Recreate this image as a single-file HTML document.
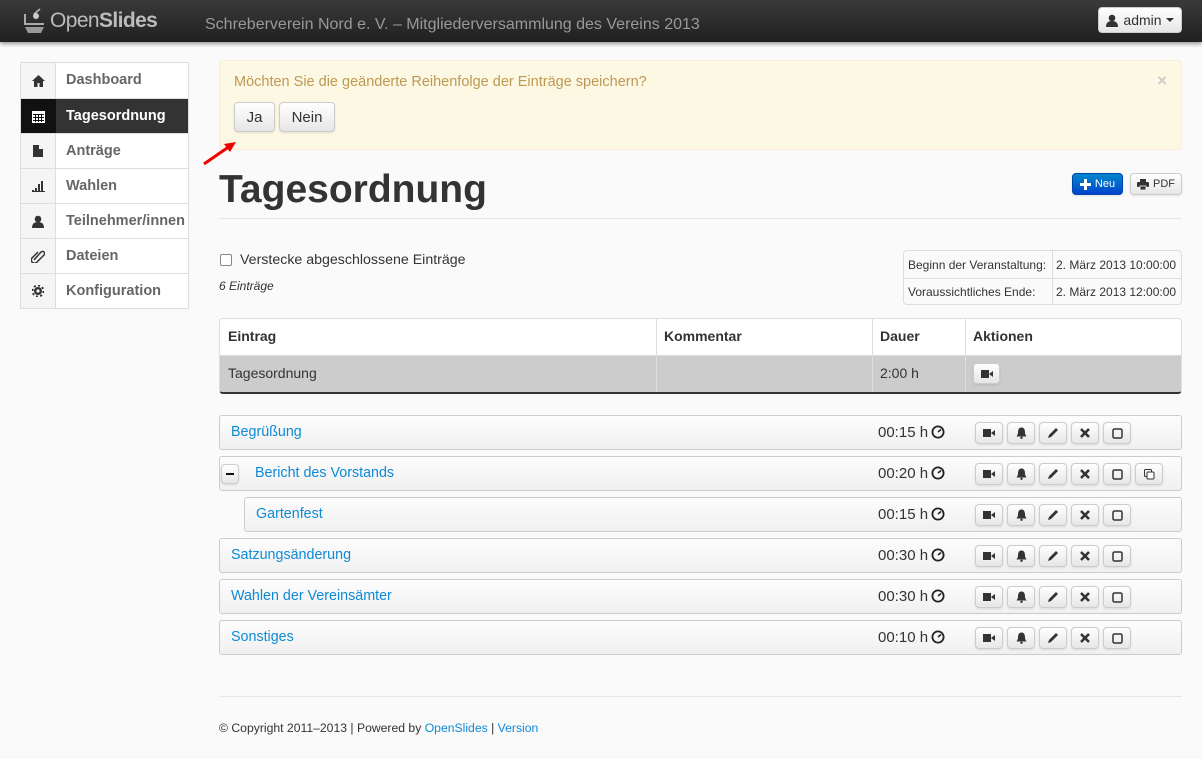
<!DOCTYPE html>
<html><head><meta charset="utf-8"><style>
*{box-sizing:border-box;margin:0;padding:0}
body{width:1202px;height:759px;background:#fafafa;font-family:"Liberation Sans",sans-serif;color:#333;position:relative;overflow:hidden;font-size:14px}
.a{position:absolute}
.nav{left:0;top:0;width:1202px;height:42px;background:linear-gradient(#3a3a3a,#202020);box-shadow:0 2px 4px rgba(0,0,0,.4)}
.side{left:20px;top:62px;width:169px;border:1px solid #ddd;background:#fff}
.side div{height:35px;border-top:1px solid #ddd;position:relative;font-weight:bold;font-size:14.5px;color:#666;line-height:35px;padding-left:45px;white-space:nowrap}
.side div:first-child{border-top:none}
.side div .ic{position:absolute;left:0;top:0;width:35px;height:100%;background:#f5f5f5;border-right:1px solid #ddd;display:flex;align-items:center;justify-content:center}
.side div.act{background:#333;color:#fff}
.side div.act .ic{background:#111;border-color:#111}
.btn{position:absolute;border:1px solid #ccc;border-radius:4px;background:linear-gradient(#fff,#e6e6e6);box-shadow:0 1px 2px rgba(0,0,0,.1);display:flex;align-items:center;justify-content:center;color:#333}
.row{position:absolute;height:35px;border:1px solid #ccc;border-radius:3px;background:linear-gradient(#fdfdfd,#f0f0f0)}
.row .t{position:absolute;top:8px;color:#0e8ad6;font-size:14.3px}
.row .d{position:absolute;left:658px;top:8px;font-size:15px;color:#333}
.sb{width:28px;height:22px;top:6px}
a{color:#0e8ad6;text-decoration:none}
</style></head><body>
<div class="a nav">
 <svg class="a" style="left:22px;top:6px" width="24" height="30" viewBox="0 0 24 30"><path d="M3 8v10h19" stroke="#aaa" stroke-width="2" fill="none"/><path d="M12 8 L18 3" stroke="#bbb" stroke-width="1.5"/><circle cx="14" cy="10" r="3" fill="#ccc"/><path d="M3 21h19l-3 6H6z" fill="#999"/></svg>
 <div class="a" style="left:50px;top:9px;font-size:21px;color:#bbb;letter-spacing:-0.6px">Open<b style="font-weight:bold">Slides</b></div>
 <div class="a" style="left:205px;top:16px;font-size:16px;color:#999">Schreberverein Nord e. V. – Mitgliederversammlung des Vereins 2013</div>
 <div class="btn" style="left:1098px;top:7px;width:84px;height:26px;font-size:14px">
  <svg width="12" height="13" viewBox="0 0 12 13" style="margin-right:5px"><circle cx="6" cy="4" r="3.3" fill="#333"/><path d="M0 13c0-5 3-6 6-6s6 1 6 6z" fill="#333"/></svg>admin<span style="margin-left:4px;border:4px solid transparent;border-top-color:#333;border-bottom:none;width:0;height:0;display:inline-block"></span></div>
</div>
<div class="a side">
 <div><span class="ic"><svg width="13" height="12"><path d="M6.5 0L0 6h2v6h3.5V8h2v4H11V6h2z" fill="#333"/></svg></span>Dashboard</div>
 <div class="act"><span class="ic"><svg width="13" height="13"><rect x="0" y="1" width="13" height="12" fill="#fff"/><g fill="#111"><rect x="1" y="4" width="11" height="1"/><rect x="1" y="7" width="11" height="1"/><rect x="1" y="10" width="11" height="1"/><rect x="3" y="4" width="1" height="8"/><rect x="6" y="4" width="1" height="8"/><rect x="9" y="4" width="1" height="8"/></g></svg></span>Tagesordnung</div>
 <div><span class="ic"><svg width="10" height="12"><path d="M0 0h6l4 4v8H0z" fill="#333"/><path d="M6 0v4h4" fill="#fff"/></svg></span>Anträge</div>
 <div><span class="ic"><svg width="13" height="11"><g fill="#333"><rect x="0" y="9" width="2" height="2"/><rect x="3" y="7" width="2" height="4"/><rect x="6" y="3" width="2" height="8"/><rect x="9" y="0" width="2" height="11"/><rect x="0" y="10" width="13" height="1"/></g></svg></span>Wahlen</div>
 <div><span class="ic"><svg width="12" height="13"><circle cx="6" cy="4" r="3.3" fill="#333"/><path d="M0 13c0-5 3-6 6-6s6 1 6 6z" fill="#333"/></svg></span>Teilnehmer/innen</div>
 <div><span class="ic"><svg width="14" height="14"><path d="M3 11L10 3a2 2 0 0 1 3 3L6 13a3 3 0 0 1-5-4l6-6" stroke="#333" stroke-width="1.5" fill="none"/></svg></span>Dateien</div>
 <div><span class="ic"><svg width="12" height="12"><circle cx="6" cy="6" r="4" fill="#333"/><circle cx="6" cy="6" r="5.5" fill="none" stroke="#333" stroke-width="2" stroke-dasharray="2 2.3"/><circle cx="6" cy="6" r="1.6" fill="#f5f5f5"/></svg></span>Konfiguration</div>
</div>
<div class="a" style="left:219px;top:60px;width:963px;height:90px;background:#fcf8e3;border:1px solid #fbeed5;border-radius:4px">
 <div class="a" style="left:14px;top:13px;font-size:14.5px;color:#c09853">Möchten Sie die geänderte Reihenfolge der Einträge speichern?</div>
 <div class="a" style="right:14px;top:10px;font-size:17px;color:#ccc;font-weight:bold">×</div>
 <div class="btn" style="left:14px;top:41px;width:41px;height:30px;font-size:15px">Ja</div>
 <div class="btn" style="left:59px;top:41px;width:56px;height:30px;font-size:15px">Nein</div>
</div>
<svg class="a" style="left:202px;top:140px" width="36" height="26"><path d="M2 24L28 6" stroke="#e00" stroke-width="3"/><path d="M34 2L22 4l6 8z" fill="#e00"/></svg>
<div class="a" style="left:219px;top:168px;font-size:39px;font-weight:bold;color:#333">Tagesordnung</div>
<div class="btn" style="left:1072px;top:173px;width:51px;height:22px;background:linear-gradient(#0088cc,#0044cc);border-color:#0044aa;color:#fff;font-size:11px"><svg width="11" height="11" style="margin-right:4px"><path d="M4 0h3v4h4v3H7v4H4V7H0V4h4z" fill="#fff"/></svg>Neu</div>
<div class="btn" style="left:1130px;top:173px;width:52px;height:22px;font-size:11px"><svg width="12" height="11" style="margin-right:4px"><rect x="3" y="0" width="6" height="3" fill="#333"/><rect x="0" y="3" width="12" height="5" rx="1" fill="#333"/><rect x="3" y="7" width="6" height="4" fill="#333" stroke="#fff" stroke-width=".8"/></svg>PDF</div>
<div class="a" style="left:219px;top:218px;width:963px;border-top:1px solid #e6e6e6"></div>
<div class="a" style="left:220px;top:254px;width:12px;height:12px;border:1px solid #888;border-radius:2px;background:#fff"></div>
<div class="a" style="left:240px;top:252px;font-size:14.2px">Verstecke abgeschlossene Einträge</div>
<div class="a" style="left:219px;top:279px;font-size:12px;font-style:italic">6 Einträge</div>
<div class="a" style="left:903px;top:250px;width:279px;height:55px;border:1px solid #ddd;border-radius:4px;font-size:12px">
 <div class="a" style="left:0;top:27px;width:277px;border-top:1px solid #ddd"></div>
 <div class="a" style="left:148px;top:0;height:53px;border-left:1px solid #ddd"></div>
 <div class="a" style="left:4px;top:7px">Beginn der Veranstaltung:</div>
 <div class="a" style="left:152px;top:7px">2. März 2013 10:00:00</div>
 <div class="a" style="left:4px;top:34px">Voraussichtliches Ende:</div>
 <div class="a" style="left:152px;top:34px">2. März 2013 12:00:00</div>
</div>
<div class="a" style="left:219px;top:318px;width:963px;height:76px;border:1px solid #ddd;border-radius:4px;background:#fff;overflow:hidden;border-bottom:2px solid #333">
 <div class="a" style="left:0;top:36px;width:963px;height:40px;background:#ccc;border-top:1px solid #ddd"></div>
 <div class="a" style="left:436px;top:0;height:76px;border-left:1px solid #ddd"></div>
 <div class="a" style="left:652px;top:0;height:76px;border-left:1px solid #ddd"></div>
 <div class="a" style="left:745px;top:0;height:76px;border-left:1px solid #ddd"></div>
 <div class="a" style="left:8px;top:9px;font-weight:bold">Eintrag</div>
 <div class="a" style="left:444px;top:9px;font-weight:bold">Kommentar</div>
 <div class="a" style="left:660px;top:9px;font-weight:bold">Dauer</div>
 <div class="a" style="left:753px;top:9px;font-weight:bold">Aktionen</div>
 <div class="a" style="left:8px;top:46px">Tagesordnung</div>
 <div class="a" style="left:660px;top:46px">2:00 h</div>
 <div class="btn" style="left:753px;top:44px;width:27px;height:21px"><svg width="12" height="8"><rect width="8" height="8" fill="#333"/><path d="M8 4l4-3v6z" fill="#333"/></svg></div>
</div>
<div id="rows"></div>
<div class="a" style="left:219px;top:696px;width:963px;border-top:1px solid #e6e6e6"></div>
<div class="a" style="left:219px;top:721px;font-size:12.2px">© Copyright 2011–2013 | Powered by <a>OpenSlides</a> | <a>Version</a></div>
<script>
var cam='<svg width="12" height="8"><rect width="8" height="8" fill="#333"/><path d="M8 4l4-3v6z" fill="#333"/></svg>';
var bell='<svg width="11" height="12"><path d="M5.5 0.5c-3 0-3.5 3-3.5 5s-1 3-1.5 4h10c-.5-1-1.5-2-1.5-4s-.5-5-3.5-5z" fill="#333"/><circle cx="5.5" cy="10.8" r="1.2" fill="#333"/></svg>';
var pen='<svg width="12" height="12"><path d="M1 11l1-3 7-7 2 2-7 7z" fill="#333"/></svg>';
var x='<svg width="10" height="10"><path d="M1 1l8 8M9 1l-8 8" stroke="#333" stroke-width="2.6"/></svg>';
var sq='<svg width="11" height="11"><rect x="1" y="1" width="9" height="9" rx="1.5" fill="none" stroke="#333" stroke-width="1.5"/></svg>';
var cp='<svg width="11" height="11"><rect x="0.5" y="0.5" width="7" height="7" rx="1" fill="none" stroke="#333"/><rect x="3" y="3" width="7" height="7" rx="1" fill="#fff" stroke="#333"/></svg>';
var clk='<svg width="14" height="14" style="position:absolute;left:711px;top:9px"><circle cx="7" cy="7" r="5.6" fill="none" stroke="#222" stroke-width="1.8"/><path d="M7 7L10 4.5" stroke="#222" stroke-width="1.6"/></svg>';
var R=[["Begrüßung","00:15",415,219,0,0],["Bericht des Vorstands","00:20",456,219,1,1],["Gartenfest","00:15",497,244,0,0],["Satzungsänderung","00:30",538,219,0,0],["Wahlen der Vereinsämter","00:30",579,219,0,0],["Sonstiges","00:10",620,219,0,0]];
var h='';
R.forEach(function(r){
 var off=r[3]-219, w=963-off;
 h+='<div class="row" style="left:'+r[3]+'px;top:'+r[2]+'px;width:'+w+'px">';
 if(r[4]) h+='<div class="btn" style="left:1px;top:7px;width:18px;height:20px"><div style="width:8px;height:2px;background:#111"></div></div>';
 h+='<div class="t" style="left:'+(r[4]?35:11)+'px">'+r[0]+'</div>';
 h+='<div class="d" style="left:'+(658-off)+'px">'+r[1]+' h</div>'+clk.replace('left:711px','left:'+(711-off)+'px');
 var ic=[cam,bell,pen,x,sq]; if(r[5]) ic.push(cp);
 ic.forEach(function(c,i){h+='<div class="btn sb" style="left:'+(755-off+i*32)+'px">'+c+'</div>';});
 h+='</div>';
});
document.getElementById('rows').innerHTML=h;
</script>
</body></html>
